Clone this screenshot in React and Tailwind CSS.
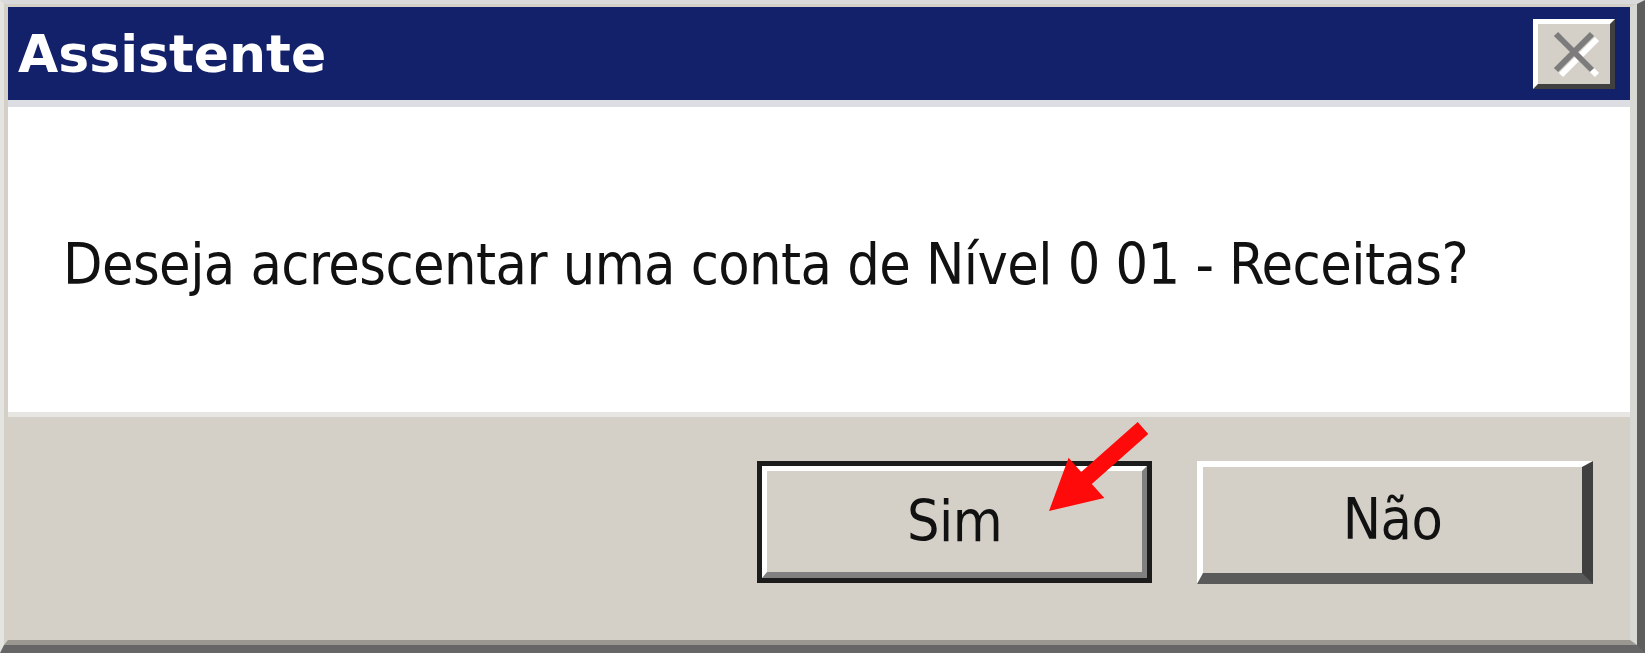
import React from "react";

function CloseButton() {
  return (
    <div className="w-[82px] h-[70px] bg-[#d4d0c8] border-t-[5px] border-l-[5px] border-t-white border-l-white border-b-[5px] border-r-[5px] border-b-[#404040] border-r-[#404040] flex items-center justify-center">
      <svg width="52" height="48" viewBox="0 0 52 48">
        <path d="M10 6 L46 42 M46 6 L10 42" stroke="#ffffff" strokeWidth="6" transform="translate(3 3)" />
        <path d="M8 4 L44 40 M44 4 L8 40" stroke="#7c7c7c" strokeWidth="6" />
      </svg>
    </div>
  );
}

function RedArrow() {
  return (
    <svg
      className="absolute left-[1040px] top-[415px]"
      width="115"
      height="105"
      viewBox="0 0 115 105"
    >
      <polygon
        points="9,96 28.6,42.7 41.2,56.9 97.7,7 108.3,19 51.8,68.9 64.4,83.1"
        fill="#ff0a0a"
      />
    </svg>
  );
}

export default function App() {
  const font = "font-['DejaVu_Sans_Condensed','DejaVu_Sans',sans-serif]";

  return (
    <div className="relative w-[1645px] h-[653px] overflow-hidden">
      <div className="h-full border-t-4 border-l-4 border-r-8 border-b-8 border-t-[#dadada] border-l-[#e4e4e0] border-r-[#5e5e5e] border-b-[#666666]">
        <div className="h-full flex flex-col border-t-[3px] border-l-[4px] border-r-[7px] border-b-[5px] border-t-[#d4d0c8] border-l-[#d4d0c8] border-r-[#d8d8d4] border-b-[#9a9690] bg-[#d4d0c8]">
          {/* title bar */}
          <div className="h-[93px] bg-[#13216a] flex items-center justify-between pl-[10px] pr-[15px]">
            <span className="font-['DejaVu_Sans',sans-serif] text-white font-bold text-[52px] leading-none">
              Assistente
            </span>
            <CloseButton />
          </div>

          {/* message */}
          <div className="h-[312px] bg-white border-t-[7px] border-[#dcdee4] flex items-center pl-[55px] pt-[10px]">
            <p className={`${font} text-[#111111] text-[57px] tracking-[-0.55px] leading-none`}>
              Deseja acrescentar uma conta de Nível 0 01 - Receitas?
            </p>
          </div>

          {/* buttons */}
          <div className="flex-1 border-t-[5px] border-[#e8e6e2] flex justify-end items-start gap-[45px] pt-[44px] pr-[37px]">
            <button className={`${font} w-[395px] h-[122px] border-[5px] border-[#1c1c1c] bg-[#d4d0c8] text-[57px] tracking-[-0.55px] text-[#111111]`}>
              <div className="w-full h-full flex items-center justify-center border-t-[5px] border-l-[5px] border-t-white border-l-white border-b-[6px] border-r-[5px] border-b-[#808080] border-r-[#808080]">
                Sim
              </div>
            </button>
            <button className={`${font} w-[396px] h-[123px] flex items-center justify-center bg-[#d4d0c8] text-[57px] tracking-[-0.55px] text-[#111111] border-t-[6px] border-l-[6px] border-t-white border-l-white border-b-[11px] border-r-[11px] border-b-[#5a5a5a] border-r-[#404040]`}>
              Não
            </button>
          </div>
        </div>
      </div>
      <RedArrow />
    </div>
  );
}
